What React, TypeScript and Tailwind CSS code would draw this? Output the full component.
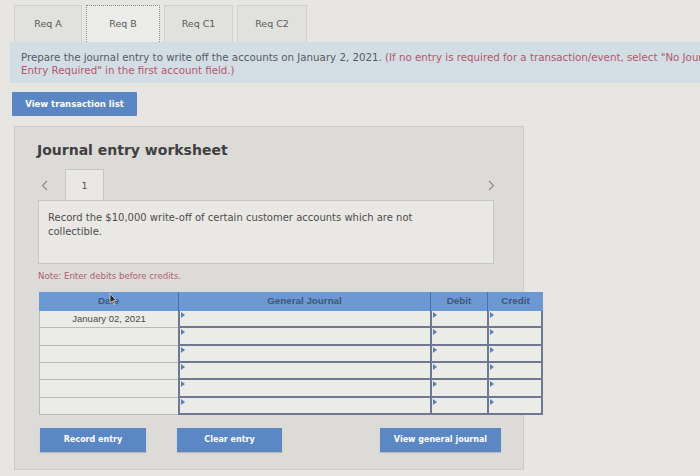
import React from 'react'

const tabs = ['Req A', 'Req B', 'Req C1', 'Req C2']
const tabWidths = ['w-[68px]', 'w-[74px]', 'w-[69px]', 'w-[70px]']

function Marker() {
  return <span className="mt-[1px] ml-[1px] h-0 w-0 border-y-[3px] border-l-[4px] border-y-transparent border-l-[#5b7fb6]" />
}

function Row({ date }: { date?: string }) {
  return (
    <div className="flex h-[17.33px]">
      <div className="flex w-[139px] items-center justify-center border-b border-l border-[#b8b8b5] bg-[#ebebe8] text-[9.5px] text-[#4a4a4a] [font-family:'Liberation_Sans',Arial,sans-serif]">
        {date}
      </div>
      <div className="flex w-[252px] items-start border-b-2 border-l-2 border-[#6f7893] bg-[#ebebe8]"><Marker /></div>
      <div className="flex w-[57px] items-start border-b-2 border-l-2 border-[#6f7893] bg-[#ebebe8]"><Marker /></div>
      <div className="flex w-[56px] items-start border-x-2 border-b-2 border-[#6f7893] bg-[#ebebe8]"><Marker /></div>
    </div>
  )
}

function Chevron({ dir }: { dir: 'left' | 'right' }) {
  return (
    <svg width="7" height="11" viewBox="0 0 7 11">
      <polyline
        points={dir === 'left' ? '6,1 1.5,5.5 6,10' : '1,1 5.5,5.5 1,10'}
        fill="none"
        stroke="#8e8e8e"
        strokeWidth="1.2"
      />
    </svg>
  )
}

export default function App() {
  const btn = 'flex h-[24px] items-center justify-center bg-[#5b87c5] text-[8px] font-bold text-white shadow-[0_1px_1px_rgba(0,0,0,0.15)]'
  return (
    <div className="h-[476px] w-[700px] overflow-hidden bg-[#e7e6e2] [font-family:'DejaVu_Sans',Verdana,sans-serif]">
      {/* requirement tabs */}
      <div className="flex gap-[4px] pl-[14px] pt-[5px]">
        {tabs.map((t, i) => (
          <div
            key={t}
            className={`${tabWidths[i]} flex h-[37px] items-center justify-center border border-b-0 text-[9.5px] text-[#5a5a5a] ${
              i === 1 ? 'border-dotted border-[#8c8c8c] bg-[#ececea]' : 'border-[#d2d2ce] bg-[#e1e1de]'
            }`}
          >
            {t}
          </div>
        ))}
      </div>

      <div className="ml-[10px] h-[41px] w-[728px] bg-[#d3dde4] pl-[11px] pt-[9px] text-[10.25px] leading-[13px] text-[#555b62]">
        Prepare the journal entry to write off the accounts on January 2, 2021.{' '}
        <span className="text-[#b5566b]">
          (If no entry is required for a transaction/event, select "No Journal Entry Required" in the first account field.)
        </span>
      </div>

      <button className="ml-[12px] mt-[9px] flex h-[24px] w-[125px] items-center justify-center rounded-[1px] bg-[#5a86c4] text-[8.5px] font-bold text-white">
        View transaction list
      </button>

      {/* worksheet panel */}
      <div className="ml-[14px] mt-[10px] h-[344px] w-[510px] border border-[#cbcac6] bg-[#dcdbd7] pl-[23px] pt-[15px]">
        <h2 className="-ml-[1px] text-[14px] font-bold leading-[16px] text-[#404040]">Journal entry worksheet</h2>

        <div className="mt-[11px] flex h-[31px] w-[456px] items-end">
          <span className="mb-[9px] ml-[3px] w-[24px]"><Chevron dir="left" /></span>
          <div className="flex h-[31px] w-[39px] items-center justify-center border border-b-0 border-[#c6c6c2] bg-[#e9e8e5] pt-[3px] text-[9.5px] text-[#555]">
            1
          </div>
          <span className="mb-[9px] ml-auto mr-[-1px]"><Chevron dir="right" /></span>
        </div>

        <div className="h-[64px] w-[456px] border border-[#c6c6c2] bg-[#e9e8e5] pl-[9px] pt-[10px] text-[10px] leading-[14px] text-[#4d4d4d]">
          Record the $10,000 write-off of certain customer accounts which are not
          <br />
          collectible.
        </div>

        <p className="mt-[6px] text-[8.6px] leading-[12px] text-[#b4616f]">Note: Enter debits before credits.</p>

        {/* journal table */}
        <div className="ml-[1px] mt-[10px] w-[504px]">
          <div className="flex h-[19px] bg-[#6d98d4] text-[9.8px] font-bold text-[#3e5679] [font-family:'Liberation_Sans',Arial,sans-serif]">
            <div className="relative flex w-[139px] items-center justify-center">
              Date
              <svg className="absolute left-[70px] top-[1px]" width="8" height="12" viewBox="0 0 8 12">
                <path d="M1 0.5 L1 10 L3.2 8 L4.8 11.5 L6 11 L4.4 7.6 L7.3 7.6 Z" fill="#2a2a2a" stroke="#eee" strokeWidth="0.7" />
              </svg>
            </div>
            <div className="flex w-[252px] items-center justify-center border-l border-[#4f6f9c]">General Journal</div>
            <div className="flex w-[57px] items-center justify-center border-l border-[#4f6f9c]">Debit</div>
            <div className="flex w-[56px] items-center justify-center border-l border-[#4f6f9c]">Credit</div>
          </div>
          <Row date="January 02, 2021" />
          <Row />
          <Row />
          <Row />
          <Row />
          <Row />
        </div>

        <div className="ml-[2px] mt-[13px] flex items-start">
          <button className={`${btn} w-[106px]`}>Record entry</button>
          <button className={`${btn} ml-[31px] w-[105px]`}>Clear entry</button>
          <button className={`${btn} ml-[98px] w-[121px]`}>View general journal</button>
        </div>
      </div>
    </div>
  )
}
